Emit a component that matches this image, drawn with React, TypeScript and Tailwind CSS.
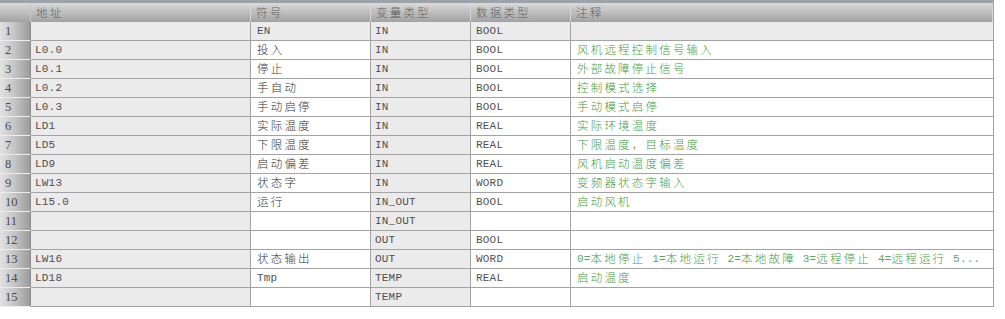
const columns = ["地址", "符号", "变量类型", "数据类型", "注释"];

type Row = {
  addr: string;
  symbol: string;
  varType: string;
  dataType: string;
  comment: string;
};

const rows: Row[] = [
  { addr: "", symbol: "EN", varType: "IN", dataType: "BOOL", comment: "" },
  { addr: "L0.0", symbol: "投入", varType: "IN", dataType: "BOOL", comment: "风机远程控制信号输入" },
  { addr: "L0.1", symbol: "停止", varType: "IN", dataType: "BOOL", comment: "外部故障停止信号" },
  { addr: "L0.2", symbol: "手自动", varType: "IN", dataType: "BOOL", comment: "控制模式选择" },
  { addr: "L0.3", symbol: "手动启停", varType: "IN", dataType: "BOOL", comment: "手动模式启停" },
  { addr: "LD1", symbol: "实际温度", varType: "IN", dataType: "REAL", comment: "实际环境温度" },
  { addr: "LD5", symbol: "下限温度", varType: "IN", dataType: "REAL", comment: "下限温度，目标温度" },
  { addr: "LD9", symbol: "启动偏差", varType: "IN", dataType: "REAL", comment: "风机启动温度偏差" },
  { addr: "LW13", symbol: "状态字", varType: "IN", dataType: "WORD", comment: "变频器状态字输入" },
  { addr: "L15.0", symbol: "运行", varType: "IN_OUT", dataType: "BOOL", comment: "启动风机" },
  { addr: "", symbol: "", varType: "IN_OUT", dataType: "", comment: "" },
  { addr: "", symbol: "", varType: "OUT", dataType: "BOOL", comment: "" },
  {
    addr: "LW16",
    symbol: "状态输出",
    varType: "OUT",
    dataType: "WORD",
    comment: "0=本地停止 1=本地运行 2=本地故障 3=远程停止 4=远程运行 5...",
  },
  { addr: "LD18", symbol: "Tmp", varType: "TEMP", dataType: "REAL", comment: "启动温度" },
  { addr: "", symbol: "", varType: "TEMP", dataType: "", comment: "" },
];

// SimSun-ish look: half-width latin in mono, CJK spaced out
function Mixed({ text }: { text: string }) {
  const parts = text.match(/[\u3000-\u9fff\uff00-\uffef]+|[^\u3000-\u9fff\uff00-\uffef]+/g) ?? [];
  return (
    <>
      {parts.map((p, i) =>
        /[\u3000-\u9fff\uff00-\uffef]/.test(p) ? (
          <span
            key={i}
            className="font-['Noto_Sans_CJK_SC',sans-serif] text-[11.5px] font-light tracking-[2.2px]"
          >
            {p}
          </span>
        ) : (
          <span
            key={i}
            className="font-['Liberation_Mono',monospace] text-[11px] tracking-[0.2px] whitespace-pre opacity-85"
          >
            {p}
          </span>
        )
      )}
    </>
  );
}

const cell = "flex items-center overflow-hidden whitespace-nowrap border-r border-b border-[#a3a3a3] h-[19px]";

export default function App() {
  return (
    <div className="w-[1005px] h-[319px] bg-white overflow-hidden">
      <div className="w-[994px] border-r border-[#a3a3a3]">
        <div className="h-[3px] bg-[#9ea2a9]" />
        <div className="grid grid-cols-[31px_220px_120px_100px_100px_422px]">
          {/* header */}
          <div className="h-[19px] bg-gradient-to-b from-[#dadada] to-[#a2a2a2] border-r border-[#c9c9c9]" />
          {columns.map((c) => (
            <div
              key={c}
              className="h-[19px] flex items-center pl-[5px] bg-gradient-to-b from-[#dadada] to-[#a2a2a2] border-r border-[#d6d6d6] text-[#5e5e5e]"
            >
              <Mixed text={c} />
            </div>
          ))}

          {rows.map((r, i) => {
            const first = i === 0;
            return [
              <div
                key={`n${i}`}
                className={`${cell} pl-[5px] bg-gradient-to-r from-[#e2e2e2] via-[#c4c4c4] to-[#9b9b9b] text-[#4a4a4a] border-r-[#8e8e8e] border-b-[#ededed]`}
              >
                <span className="font-['Liberation_Serif',serif] text-[12.5px]">{i + 1}</span>
              </div>,
              <div key={`a${i}`} className={`${cell} pl-[4px] bg-[#ebebeb] text-[#333]`}>
                <Mixed text={r.addr} />
              </div>,
              <div
                key={`s${i}`}
                className={`${cell} pl-[6px] ${first ? "bg-[#ebebeb]" : "bg-white"} text-[#333]`}
              >
                <Mixed text={r.symbol} />
              </div>,
              <div key={`v${i}`} className={`${cell} pl-[4px] bg-[#ebebeb] text-[#333]`}>
                <Mixed text={r.varType} />
              </div>,
              <div
                key={`d${i}`}
                className={`${cell} pl-[5px] ${first ? "bg-[#ebebeb]" : "bg-white"} text-[#333]`}
              >
                <Mixed text={r.dataType} />
              </div>,
              <div
                key={`c${i}`}
                className={`${cell} border-r-0 pl-[6px] ${first ? "bg-[#ebebeb]" : "bg-white"} text-[#3f9a3f]`}
              >
                <Mixed text={r.comment} />
              </div>,
            ];
          })}
        </div>
      </div>
    </div>
  );
}
